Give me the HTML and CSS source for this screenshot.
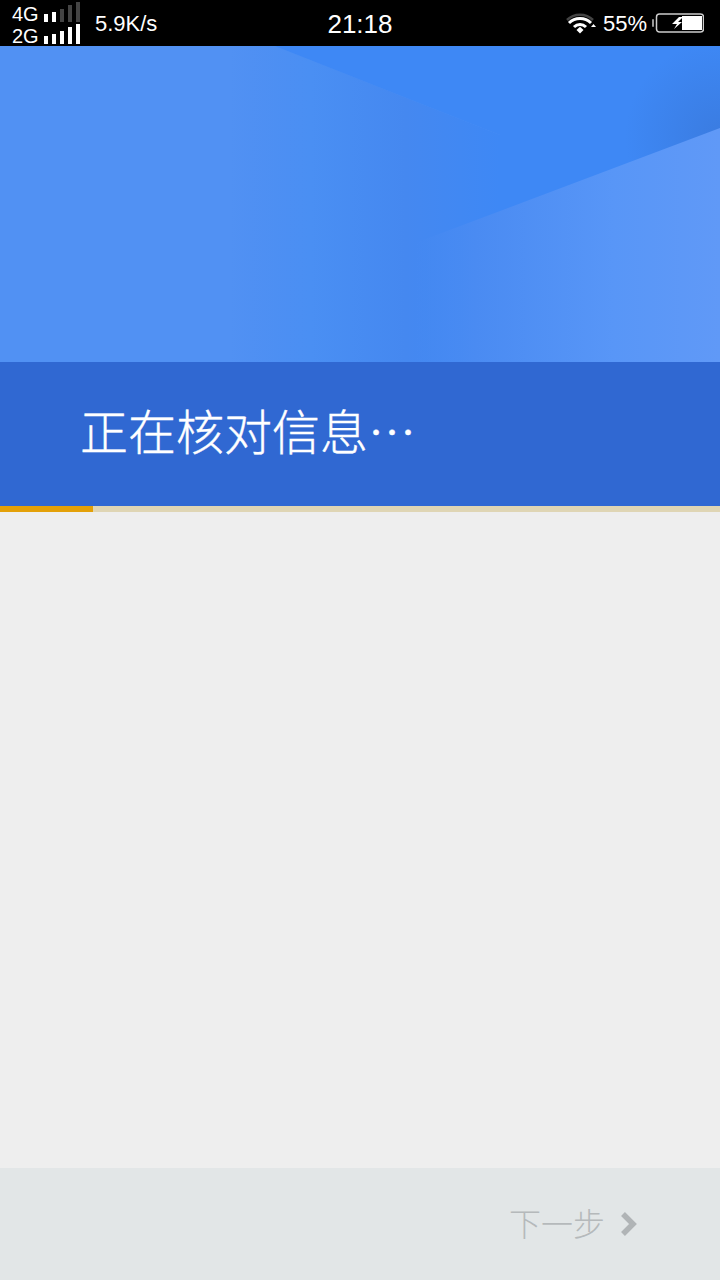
FILE: index.html
```html
<!DOCTYPE html>
<html lang="zh-CN">
<head>
  <meta charset="UTF-8">
  <title>正在核对信息</title>
  <link rel="stylesheet" href="styles.css">
</head>
<body>
  <div class="statusbar">
    <div class="status-left">
      <div class="nets">
        <div class="net">
          <span class="net-name">4G</span>
          <svg class="bars" width="38" height="20" viewBox="0 0 38 20">
            <rect x="1" y="12" width="4" height="8" fill="#fff"/>
            <rect x="9" y="10" width="4" height="10" fill="#fff"/>
            <rect x="17" y="7" width="4" height="13" fill="#444"/>
            <rect x="25" y="3" width="4" height="17" fill="#444"/>
            <rect x="33" y="0" width="4" height="20" fill="#444"/>
          </svg>
        </div>
        <div class="net">
          <span class="net-name">2G</span>
          <svg class="bars" width="38" height="20" viewBox="0 0 38 20">
            <rect x="1" y="12" width="4" height="8" fill="#fff"/>
            <rect x="9" y="10" width="4" height="10" fill="#fff"/>
            <rect x="17" y="7" width="4" height="13" fill="#fff"/>
            <rect x="25" y="3" width="4" height="17" fill="#fff"/>
            <rect x="33" y="0" width="4" height="20" fill="#fff"/>
          </svg>
        </div>
      </div>
      <span class="speed">5.9K/s</span>
    </div>
    <span class="clock">21:18</span>
    <div class="status-right">
      <svg class="wifi" width="30" height="22" viewBox="0 0 30 22">
        <path d="M1 7 C8 0 20 0 27 7" fill="none" stroke="#444" stroke-width="2.5"/>
        <path d="M3 10 C9 4 19 4 25 10" fill="none" stroke="#fff" stroke-width="3"/>
        <path d="M8 14 C11.500 10.500 16.500 10.500 20 14" fill="none" stroke="#fff" stroke-width="3"/>
        <path d="M10.500 17 L14 13.800 L17.500 17 L14 20.500 Z" fill="#fff"/>
        <path d="M25 14 L27.500 11 L30 14 Z" fill="#fff"/>
      </svg>
      <span class="battery-pct">55%</span>
      <svg class="battery" width="52" height="22" viewBox="0 0 52 22">
        <rect x="0" y="7" width="2" height="8" rx="1" fill="#999"/>
        <rect x="4.500" y="2" width="47" height="18" rx="3" fill="none" stroke="#ccc" stroke-width="1.500"/>
        <rect x="30" y="4" width="20" height="14" fill="#fff"/>
        <path d="M27 5 L20 12 L25 12 L22 17 L30 10 L26 10 L31 5 Z" fill="#fff"/>
      </svg>
    </div>
  </div>

  <div class="hero">
    <svg class="hero-art" width="720" height="316" viewBox="0 0 720 316">
      <defs>
        <linearGradient id="darkFade" gradientUnits="userSpaceOnUse" x1="230" y1="0" x2="500" y2="0">
          <stop offset="0" stop-color="#4a8cf2" stop-opacity="0"/>
          <stop offset="0.3" stop-color="#4a8ff3"/>
          <stop offset="0.65" stop-color="#4588f0"/>
          <stop offset="1" stop-color="#3e88f5"/>
        </linearGradient>
        <linearGradient id="lightFade" gradientUnits="userSpaceOnUse" x1="415" y1="0" x2="720" y2="0">
          <stop offset="0" stop-color="#4a8bf2" stop-opacity="0"/>
          <stop offset="0.2" stop-color="#4a8bf2"/>
          <stop offset="0.65" stop-color="#5896f7"/>
          <stop offset="1" stop-color="#6099f7"/>
        </linearGradient>
        <radialGradient id="edgeShade" gradientUnits="userSpaceOnUse" cx="720" cy="90" r="95">
          <stop offset="0" stop-color="#3875d6" stop-opacity="0.65"/>
          <stop offset="1" stop-color="#3875d6" stop-opacity="0"/>
        </radialGradient>
      </defs>
      <path d="M230 316 V0 H275 L500 89 V316 Z" fill="url(#darkFade)"/>
      <path d="M275 0 H720 V316 H500 V89 Z" fill="#3e88f5"/>
      <rect x="600" y="0" width="120" height="200" fill="url(#edgeShade)"/>
      <path d="M720 82 L415 197 V316 H720 Z" fill="url(#lightFade)"/>
    </svg>
  </div>

  <div class="title-band">
    <h1 class="title">正在核对信息⋯</h1>
  </div>

  <div class="progress">
    <div class="progress-fill"></div>
  </div>

  <div class="content"></div>

  <div class="footer">
    <span class="next">下一步</span>
    <svg class="next-arrow" width="18" height="26" viewBox="0 0 18 26">
      <path d="M3 3 L13 13 L3 23" fill="none" stroke="#b0b4b6" stroke-width="5.500"/>
    </svg>
  </div>
</body>
</html>
```

FILE: styles.css
```css
html, body {
  height: 100%;
}
body {
  margin: 0;
  display: flex;
  flex-direction: column;
  height: 1280px;
  background: #eeeeee;
  font-family: "Liberation Sans", "Noto Sans CJK SC", sans-serif;
  overflow: hidden;
}
.statusbar {
  height: 46px;
  flex: none;
  display: grid;
  grid-template-columns: 1fr auto 1fr;
  align-items: center;
  background: #000;
  color: #fff;
}
.status-left {
  display: flex;
  align-items: center;
  padding-left: 12px;
}
.nets {
  display: flex;
  flex-direction: column;
  width: 83px;
  margin-top: -2px;
}
.net {
  display: flex;
  align-items: flex-end;
  height: 22px;
}
.net-name {
  width: 31px;
  font-size: 20px;
  line-height: 22px;
  position: relative;
  top: 3px;
}
.bars {
  display: block;
}
.speed {
  font-size: 22px;
  margin-top: 2px;
}
.clock {
  font-size: 26px;
  margin-top: 2px;
}
.status-right {
  display: flex;
  align-items: center;
  justify-content: flex-end;
  padding-right: 16px;
}
.wifi {
  margin: 2px 7px 0 0;
}
.battery-pct {
  font-size: 22px;
  margin: 2px 5px 0 0;
}
.hero {
  position: relative;
  height: 316px;
  flex: none;
  background: #5191f3;
}
.hero-art {
  position: absolute;
  top: 0;
  left: 0;
  display: block;
}
.title-band {
  height: 144px;
  flex: none;
  display: flex;
  align-items: center;
  padding-left: 80px;
  background: #3068d2;
}
.title {
  margin: 0 0 10px;
  font-size: 48px;
  font-weight: 300;
  -webkit-text-stroke: 0.4px #fff;
  line-height: 56px;
  color: #fff;
  font-family: "Noto Sans CJK SC", sans-serif;
}
.progress {
  height: 6px;
  flex: none;
  background: #dfd5b4;
}
.progress-fill {
  width: 93px;
  height: 100%;
  background: #e3a008;
}
.content {
  flex: 1;
  background: #eeeeee;
}
.footer {
  height: 112px;
  flex: none;
  display: flex;
  align-items: center;
  justify-content: flex-end;
  padding-right: 82px;
  background: #e2e6e7;
}
.next {
  font-size: 32px;
  color: #b5b9bb;
  font-family: "Noto Sans CJK SC", sans-serif;
  font-weight: 300;
  margin: 0 15px 4px 0;
}
```
